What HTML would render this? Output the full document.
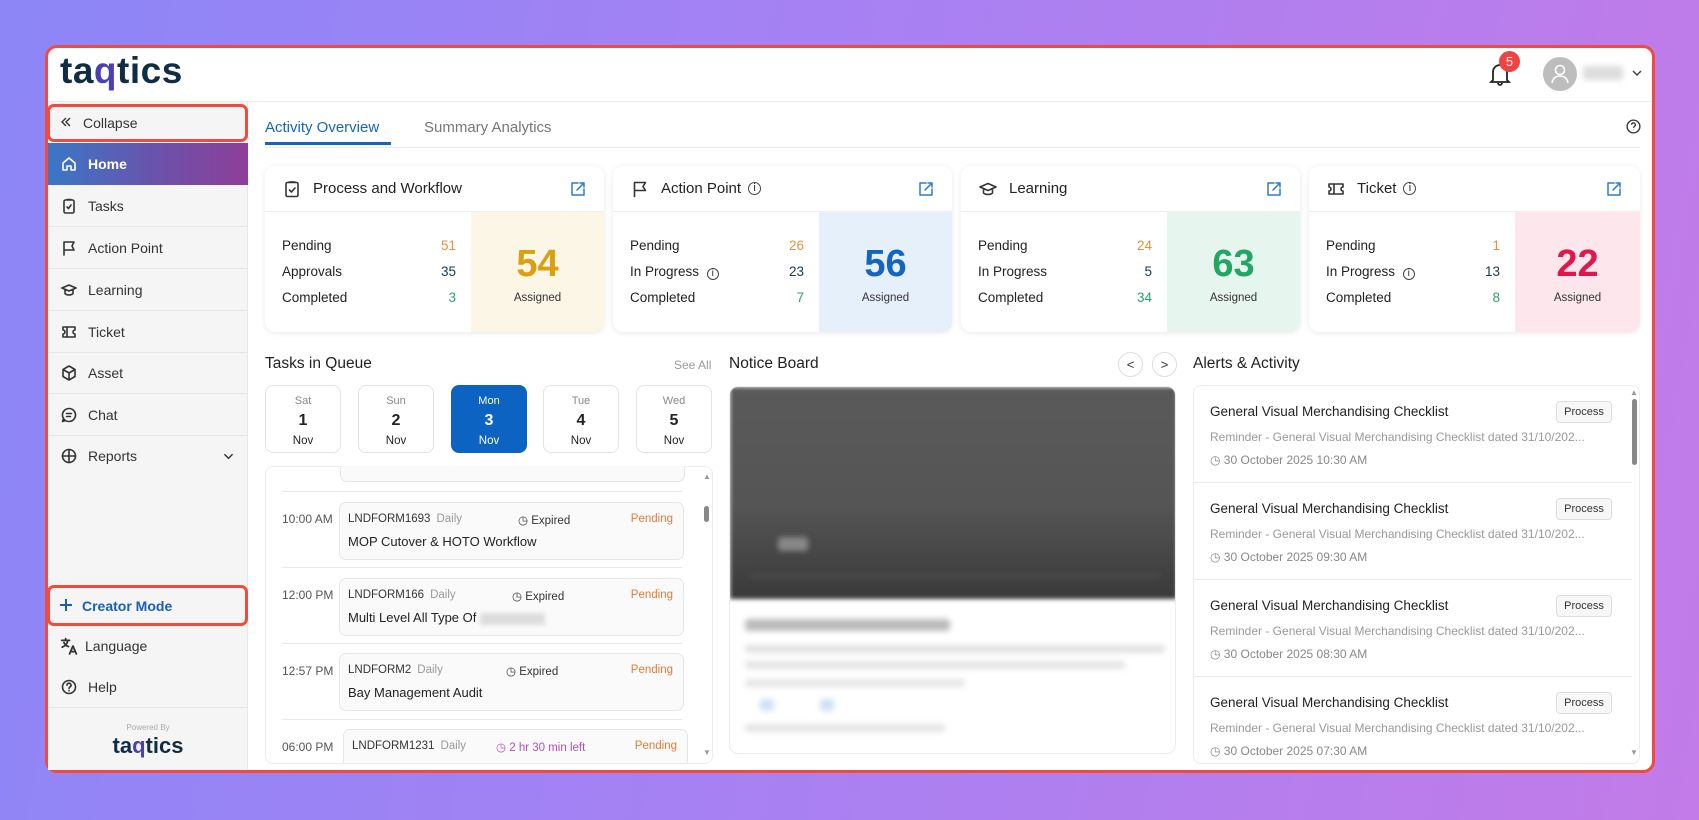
<!DOCTYPE html>
<html><head><meta charset="utf-8"><style>
*{box-sizing:border-box;margin:0;padding:0}
body{width:1699px;height:820px;overflow:hidden;background:linear-gradient(100deg,#8c86f7 0%,#a681f3 45%,#c27be8 100%);font-family:"Liberation Sans",sans-serif;color:#222;position:relative}
.a{position:absolute}
#frame{left:45px;top:45px;width:1610px;height:728px;background:#fff;border:3px solid #f24a3e;border-radius:12px;overflow:hidden}
.side{left:48px;top:102px;width:200px;height:668px;background:#f5f5f5;border-right:1px solid #e8e8e8}
.nav{position:absolute;left:48px;width:200px;height:42px;border-bottom:1px solid #e6e6e6;font-size:14px;color:#333;display:flex;align-items:center;padding-left:13px}
.nav svg{width:16px;height:16px;margin-right:11px;fill:none;stroke:#333;stroke-width:1.6;stroke-linecap:round;stroke-linejoin:round}
.card{position:absolute;top:166px;height:166px;background:#fff;border-radius:10px;box-shadow:0 1px 6px rgba(0,0,0,.09);overflow:hidden}
.ch{height:46px;border-bottom:1px solid #eee;display:flex;align-items:center;padding-left:18px;font-size:15px;font-weight:500;color:#222;position:relative}
.ch svg{width:18px;height:18px;margin-right:12px;fill:none;stroke:#333;stroke-width:1.6;stroke-linecap:round;stroke-linejoin:round}
.ch svg.ext{position:absolute;right:18px;top:15px;width:16px;height:16px;margin:0;stroke:#2b7bd0;stroke-width:1.5}
.row{position:absolute;left:17px;width:174px;font-size:13.5px;color:#222;display:flex;justify-content:space-between}
.blk{position:absolute;left:206px;top:46px;right:0;bottom:0;text-align:center}
.big{font-size:38px;font-weight:bold;margin-top:32px;line-height:40px}
.asg{font-size:11.5px;color:#333;margin-top:8px}
.date{position:absolute;top:385px;width:76px;height:68px;border:1px solid #e3e3e3;border-radius:8px;text-align:center;background:#fff}
.date .d{font-size:11px;color:#888;margin-top:9px}
.date .n{font-size:16px;font-weight:bold;margin-top:5px;color:#222}
.date .m{font-size:11.5px;margin-top:5px;color:#222}
.tc{position:absolute;left:339px;width:345px;height:58px;border:1px solid #e6e6e6;border-radius:7px;background:#fafafa}
.tc .c{position:absolute;left:8px;top:10px;font-size:11.5px;color:#333}
.tc .c span{color:#999;margin-left:6px}
.tc .e{position:absolute;left:178px;top:10px;font-size:11.5px;color:#333}
.tc .p{position:absolute;right:10px;top:10px;font-size:11.5px;color:#e07b39}
.tc .t{position:absolute;left:8px;top:31px;font-size:13px;color:#222}
.tm{position:absolute;left:282px;font-size:12px;color:#555}
.sep{position:absolute;left:282px;width:400px;height:1px;background:#e8e8e8}
.al{position:absolute;left:1194px;width:438px;height:97px;border-bottom:1px solid #ececec}
.al .t{position:absolute;left:16px;top:18px;font-size:13.5px;color:#222}
.al .b{position:absolute;left:362px;top:15px;width:56px;height:22px;border:1px solid #ddd;border-radius:4px;background:#f7f7f7;font-size:11px;text-align:center;line-height:20px;color:#333}
.al .r{position:absolute;left:16px;top:44px;font-size:12px;color:#999;width:400px;white-space:nowrap}
.al .dt{position:absolute;left:16px;top:67px;font-size:12px;color:#888}
.blur{filter:blur(3px);background:#ccc;border-radius:3px;position:absolute}
</style></head><body>
<div id="frame" class="a"></div>
<!-- header -->
<div class="a" style="left:48px;top:101px;width:1604px;height:1px;background:#ececec"></div>
<div class="a" style="left:60px;top:50px;font-size:37px;font-weight:bold;color:#0f2d44;letter-spacing:0.5px">ta<span style="color:#4a3fb5">q</span>tics</div>
<svg class="a" style="left:1489px;top:62px" width="22" height="24" viewBox="0 0 22 24" fill="none" stroke="#222" stroke-width="1.8"><path d="M4 18V10a7 7 0 0114 0v8l2 2H2z"/><path d="M9 21a2 2 0 004 0"/></svg>
<div class="a" style="left:1499px;top:51px;width:21px;height:21px;border-radius:50%;background:#ef4444;color:#fff;font-size:13px;text-align:center;line-height:21px">5</div>
<div class="a" style="left:1543px;top:57px;width:34px;height:34px;border-radius:50%;background:#bdbdbd"></div>
<svg class="a" style="left:1550px;top:63px" width="20" height="22" viewBox="0 0 20 22" fill="none" stroke="#fff" stroke-width="1.6"><circle cx="10" cy="7" r="4.5"/><path d="M2 20c1-5 4-7 8-7s7 2 8 7"/></svg>
<div class="blur" style="left:1583px;top:66px;width:40px;height:14px;background:#ddd"></div>
<svg class="a" style="left:1631px;top:68px" width="12" height="10" viewBox="0 0 12 10" fill="none" stroke="#444" stroke-width="1.5"><path d="M2 3l4 4 4-4"/></svg>
<!-- sidebar -->
<div class="a side"></div>
<div class="a" style="left:47px;top:104px;width:201px;height:38px;border:3px solid #f24a3e;border-radius:7px;background:#f5f5f5;font-size:14px;color:#333;padding:8px 0 0 33px">Collapse</div>
<svg class="a" style="left:60px;top:116px" width="12" height="12" viewBox="0 0 12 12" fill="none" stroke="#333" stroke-width="1.4"><path d="M6 2L2 6l4 4M10 2L6 6l4 4"/></svg>
<div class="nav" style="top:143px;background:linear-gradient(90deg,#3a77c6,#6f4fa8 60%,#8e3f98);color:#fff;font-weight:bold;border:none"><svg viewBox="0 0 16 16" style="stroke:#fff"><path d="M2 14V7l6-5 6 5v7h-4v-4H6v4z"/></svg>Home</div>
<div class="nav" style="top:185px"><svg viewBox="0 0 16 16"><rect x="3" y="2" width="10" height="13" rx="1.5"/><path d="M6 1.5h4M6 9l1.5 1.5L10 7"/></svg>Tasks</div>
<div class="nav" style="top:227px"><svg viewBox="0 0 16 16"><path d="M3 15V2h10l-2 4 2 4H3"/></svg>Action Point</div>
<div class="nav" style="top:269px"><svg viewBox="0 0 16 16"><path d="M1 6l7-3 7 3-7 3zM4 7.5v4c2 2 6 2 8 0v-4"/></svg>Learning</div>
<div class="nav" style="top:311px"><svg viewBox="0 0 16 16"><path d="M2 3h12v3a2 2 0 000 4v3H2v-3a2 2 0 000-4zM6 3v10"/></svg>Ticket</div>
<div class="nav" style="top:352px"><svg viewBox="0 0 16 16"><path d="M8 1l6 3.5v7L8 15l-6-3.5v-7zM2 4.5L8 8l6-3.5M8 8v7"/></svg>Asset</div>
<div class="nav" style="top:394px"><svg viewBox="0 0 16 16"><path d="M8 1.5a6.5 6.5 0 11-5.5 10L1.5 14.5l3-1A6.5 6.5 0 018 1.5zM5.5 6.5h5M5.5 9.5h4"/></svg>Chat</div>
<div class="nav" style="top:435px;border:none"><svg viewBox="0 0 16 16"><circle cx="8" cy="8" r="6.5"/><path d="M8 1.5v13M1.5 8h13"/></svg>Reports<svg viewBox="0 0 12 12" style="position:absolute;left:175px;width:11px;height:11px"><path d="M2 4l4 4 4-4"/></svg></div>
<div class="a" style="left:47px;top:585px;width:201px;height:41px;border:3px solid #f24a3e;border-radius:7px;background:#f5f5f5;font-size:14px;color:#1a5fb4;font-weight:bold;padding:10px 0 0 32px">Creator Mode</div>
<svg class="a" style="left:59px;top:598px" width="14" height="14" viewBox="0 0 14 14" fill="none" stroke="#1a5fb4" stroke-width="2"><path d="M7 1v12M1 7h12"/></svg>
<div class="nav" style="top:625px;border:none;padding-left:12px"><svg viewBox="0 0 16 16" style="width:18px;height:18px;margin-right:7px"><path d="M1.5 3h7M5 1.5V3M7 3c-.5 3-2.5 5-5 6M3.5 5c1 2 2.5 3 4 3.5M8.5 15l3-7 3 7M9.5 13h4"/></svg>Language</div>
<div class="nav" style="top:666px;border:none"><svg viewBox="0 0 16 16"><circle cx="8" cy="8" r="6.5"/><path d="M6 6.2a2 2 0 113 1.7c-.7.4-1 .8-1 1.6M8 11.5v.3"/></svg>Help</div>
<div class="a" style="left:48px;top:707px;width:200px;height:1px;background:#e6e6e6"></div>
<div class="a" style="left:48px;top:723px;width:200px;text-align:center;font-size:8px;color:#aaa">Powered By</div>
<div class="a" style="left:48px;top:733px;width:200px;text-align:center;font-size:22px;font-weight:bold;color:#0f2d44">ta<span style="color:#4a3fb5">q</span>tics</div>
<!-- tabs -->
<div class="a" style="left:265px;top:119px;font-size:15px;color:#1565c0">Activity Overview</div>
<div class="a" style="left:265px;top:142px;width:126px;height:3px;background:#1565c0"></div>
<div class="a" style="left:424px;top:119px;font-size:15px;color:#777">Summary Analytics</div>
<div class="a" style="left:265px;top:147px;width:1375px;height:1px;background:#eaeaea"></div>
<svg class="a" style="left:1626px;top:119px" width="15" height="15" viewBox="0 0 16 16" fill="none" stroke="#333" stroke-width="1.4"><circle cx="8" cy="8" r="6.8"/><path d="M6 6.2a2 2 0 113 1.7c-.7.4-1 .8-1 1.6M8 11.5v.3"/></svg>
<!-- cards -->
<div class="card" style="left:265px;width:339px">
 <div class="ch"><svg viewBox="0 0 18 18"><rect x="3" y="2.5" width="12" height="14" rx="1.5"/><path d="M6 2h6M6.5 10l2 2 3.5-4"/></svg>Process and Workflow<svg class="ext" viewBox="0 0 16 16"><path d="M8 2H2v12h12V8M10 2h4v4M14 2L7 9"/></svg></div>
 <div class="row" style="top:72px"><span>Pending</span><span style="color:#e8903a">51</span></div>
 <div class="row" style="top:98px"><span>Approvals</span><span style="color:#123a50">35</span></div>
 <div class="row" style="top:124px"><span>Completed</span><span style="color:#2aa36b">3</span></div>
 <div class="blk" style="background:#fcf6e6"><div class="big" style="color:#d9a011">54</div><div class="asg">Assigned</div></div>
</div>
<div class="card" style="left:613px;width:339px">
 <div class="ch"><svg viewBox="0 0 18 18"><path d="M3.5 16.5V2.5h11l-2.5 4 2.5 4h-11"/></svg>Action Point <span style="font-size:11px;border:1.3px solid #444;border-radius:50%;width:13px;height:13px;line-height:11px;text-align:center;margin-left:7px">i</span><svg class="ext" viewBox="0 0 16 16"><path d="M8 2H2v12h12V8M10 2h4v4M14 2L7 9"/></svg></div>
 <div class="row" style="top:72px"><span>Pending</span><span style="color:#e8903a">26</span></div>
 <div class="row" style="top:98px"><span>In Progress <span style="font-size:10px;border:1.2px solid #444;border-radius:50%;display:inline-block;width:12px;height:12px;line-height:10px;text-align:center;margin-left:4px">i</span></span><span style="color:#123a50">23</span></div>
 <div class="row" style="top:124px"><span>Completed</span><span style="color:#2aa36b">7</span></div>
 <div class="blk" style="background:#e6f0fa"><div class="big" style="color:#1565c0">56</div><div class="asg">Assigned</div></div>
</div>
<div class="card" style="left:961px;width:339px">
 <div class="ch"><svg viewBox="0 0 18 18"><path d="M1 7l8-3.5L17 7l-8 3.5zM4.5 8.5v4.5c2.5 2 6.5 2 9 0V8.5"/></svg>Learning<svg class="ext" viewBox="0 0 16 16"><path d="M8 2H2v12h12V8M10 2h4v4M14 2L7 9"/></svg></div>
 <div class="row" style="top:72px"><span>Pending</span><span style="color:#e8903a">24</span></div>
 <div class="row" style="top:98px"><span>In Progress</span><span style="color:#123a50">5</span></div>
 <div class="row" style="top:124px"><span>Completed</span><span style="color:#2aa36b">34</span></div>
 <div class="blk" style="background:#e6f6ee"><div class="big" style="color:#22a565">63</div><div class="asg">Assigned</div></div>
</div>
<div class="card" style="left:1309px;width:331px">
 <div class="ch"><svg viewBox="0 0 18 18"><path d="M2 4h14v3a2 2 0 000 4v3H2v-3a2 2 0 000-4zM7 4v10"/></svg>Ticket <span style="font-size:11px;border:1.3px solid #444;border-radius:50%;width:13px;height:13px;line-height:11px;text-align:center;margin-left:7px">i</span><svg class="ext" viewBox="0 0 16 16"><path d="M8 2H2v12h12V8M10 2h4v4M14 2L7 9"/></svg></div>
 <div class="row" style="top:72px"><span>Pending</span><span style="color:#e8903a">1</span></div>
 <div class="row" style="top:98px"><span>In Progress <span style="font-size:10px;border:1.2px solid #444;border-radius:50%;display:inline-block;width:12px;height:12px;line-height:10px;text-align:center;margin-left:4px">i</span></span><span style="color:#123a50">13</span></div>
 <div class="row" style="top:124px"><span>Completed</span><span style="color:#2aa36b">8</span></div>
 <div class="blk" style="background:#fde7ec"><div class="big" style="color:#e0174a">22</div><div class="asg">Assigned</div></div>
</div>
<!-- tasks in queue -->
<div class="a" style="left:265px;top:355px;font-size:15.5px;font-weight:500;color:#222">Tasks in Queue</div>
<div class="a" style="left:674px;top:358px;font-size:12px;color:#999">See All</div>
<div class="date" style="left:265px"><div class="d">Sat</div><div class="n">1</div><div class="m">Nov</div></div>
<div class="date" style="left:358px"><div class="d">Sun</div><div class="n">2</div><div class="m">Nov</div></div>
<div class="date" style="left:451px;background:#0d63c1;border-color:#0d63c1"><div class="d" style="color:#fff">Mon</div><div class="n" style="color:#fff">3</div><div class="m" style="color:#fff">Nov</div></div>
<div class="date" style="left:543px"><div class="d">Tue</div><div class="n">4</div><div class="m">Nov</div></div>
<div class="date" style="left:636px"><div class="d">Wed</div><div class="n">5</div><div class="m">Nov</div></div>
<div class="a" style="left:265px;top:466px;width:448px;height:298px;border:1px solid #ececec;border-radius:8px;overflow:hidden"></div>
<div class="a" style="left:340px;top:466px;width:345px;height:16px;border:1px solid #e6e6e6;border-top:none;border-radius:0 0 7px 7px;background:#fafafa"></div>
<div class="sep" style="top:491px"></div>
<div class="sep" style="top:567px"></div>
<div class="sep" style="top:643px"></div>
<div class="sep" style="top:719px"></div>
<div class="a" style="left:703px;top:472px;font-size:8px;color:#999">▲</div>
<div class="a" style="left:704px;top:506px;width:5px;height:16px;border-radius:3px;background:#888"></div>
<div class="a" style="left:703px;top:748px;font-size:8px;color:#999">▼</div>
<div class="tm" style="top:512px">10:00 AM</div>
<div class="tc" style="top:502px"><div class="c">LNDFORM1693<span>Daily</span></div><div class="e">◷ Expired</div><div class="p">Pending</div><div class="t">MOP Cutover &amp; HOTO Workflow</div></div>
<div class="tm" style="top:588px">12:00 PM</div>
<div class="tc" style="top:578px"><div class="c">LNDFORM166<span>Daily</span></div><div class="e" style="left:172px">◷ Expired</div><div class="p">Pending</div><div class="t">Multi Level All Type Of <span style="display:inline-block;width:65px;height:12px;background:#ddd;filter:blur(2px);vertical-align:middle"></span></div></div>
<div class="tm" style="top:664px">12:57 PM</div>
<div class="tc" style="top:653px"><div class="c">LNDFORM2<span>Daily</span></div><div class="e" style="left:166px">◷ Expired</div><div class="p">Pending</div><div class="t">Bay Management Audit</div></div>
<div class="tm" style="top:740px">06:00 PM</div>
<div class="tc" style="top:729px;left:343px;height:34px;border-bottom:none;border-radius:7px 7px 0 0"><div class="c">LNDFORM1231<span>Daily</span></div><div class="e" style="left:152px;color:#b04fb5">◷ 2 hr 30 min left</div><div class="p">Pending</div></div>
<!-- notice board -->
<div class="a" style="left:729px;top:355px;font-size:15.5px;font-weight:500;color:#222">Notice Board</div>
<div class="a" style="left:1118px;top:352px;width:25px;height:25px;border:1px solid #ddd;border-radius:50%;text-align:center;line-height:23px;font-size:13px;color:#333">&lt;</div>
<div class="a" style="left:1152px;top:352px;width:25px;height:25px;border:1px solid #ddd;border-radius:50%;text-align:center;line-height:23px;font-size:13px;color:#333">&gt;</div>
<div class="a" style="left:729px;top:386px;width:447px;height:368px;border:1px solid #ececec;border-radius:9px;background:#fff;overflow:hidden">
 <div class="a" style="left:0;top:0;width:447px;height:212px;background:linear-gradient(180deg,#5a5a5a 0%,#555 55%,#3a3a3a 100%);filter:blur(2px)"></div>
 <div class="blur" style="left:48px;top:150px;width:30px;height:14px;background:#888"></div>
 <div class="blur" style="left:20px;top:186px;width:410px;height:5px;background:#4a4a4a"></div>
 <div class="blur" style="left:15px;top:232px;width:205px;height:12px;background:#bbb"></div>
 <div class="blur" style="left:15px;top:258px;width:420px;height:8px;background:#e2e2e2"></div>
 <div class="blur" style="left:15px;top:274px;width:380px;height:8px;background:#e4e4e4"></div>
 <div class="blur" style="left:15px;top:292px;width:220px;height:8px;background:#e6e6e6"></div>
 <div class="blur" style="left:30px;top:312px;width:14px;height:12px;background:#cfe0f5"></div>
 <div class="blur" style="left:90px;top:312px;width:14px;height:12px;background:#cfe0f5"></div>
 <div class="blur" style="left:15px;top:337px;width:200px;height:8px;background:#e4e4e4"></div>
</div>
<!-- alerts -->
<div class="a" style="left:1193px;top:355px;font-size:15.5px;font-weight:500;color:#222">Alerts &amp; Activity</div>
<div class="a" style="left:1193px;top:385px;width:447px;height:379px;border:1px solid #ececec;border-radius:8px;overflow:hidden"></div>
<div class="al" style="top:386px"><div class="t">General Visual Merchandising Checklist</div><div class="b">Process</div><div class="r">Reminder - General Visual Merchandising Checklist dated 31/10/202...</div><div class="dt">◷ 30 October 2025 10:30 AM</div></div>
<div class="al" style="top:483px"><div class="t">General Visual Merchandising Checklist</div><div class="b">Process</div><div class="r">Reminder - General Visual Merchandising Checklist dated 31/10/202...</div><div class="dt">◷ 30 October 2025 09:30 AM</div></div>
<div class="al" style="top:580px"><div class="t">General Visual Merchandising Checklist</div><div class="b">Process</div><div class="r">Reminder - General Visual Merchandising Checklist dated 31/10/202...</div><div class="dt">◷ 30 October 2025 08:30 AM</div></div>
<div class="al" style="top:677px;height:86px;border:none;overflow:hidden"><div class="t">General Visual Merchandising Checklist</div><div class="b">Process</div><div class="r">Reminder - General Visual Merchandising Checklist dated 31/10/202...</div><div class="dt">◷ 30 October 2025 07:30 AM</div></div>
<div class="a" style="left:1630px;top:388px;font-size:8px;color:#999">▲</div>
<div class="a" style="left:1632px;top:399px;width:5px;height:66px;border-radius:3px;background:#888"></div>
<div class="a" style="left:1630px;top:748px;font-size:8px;color:#999">▼</div>
</body></html>
